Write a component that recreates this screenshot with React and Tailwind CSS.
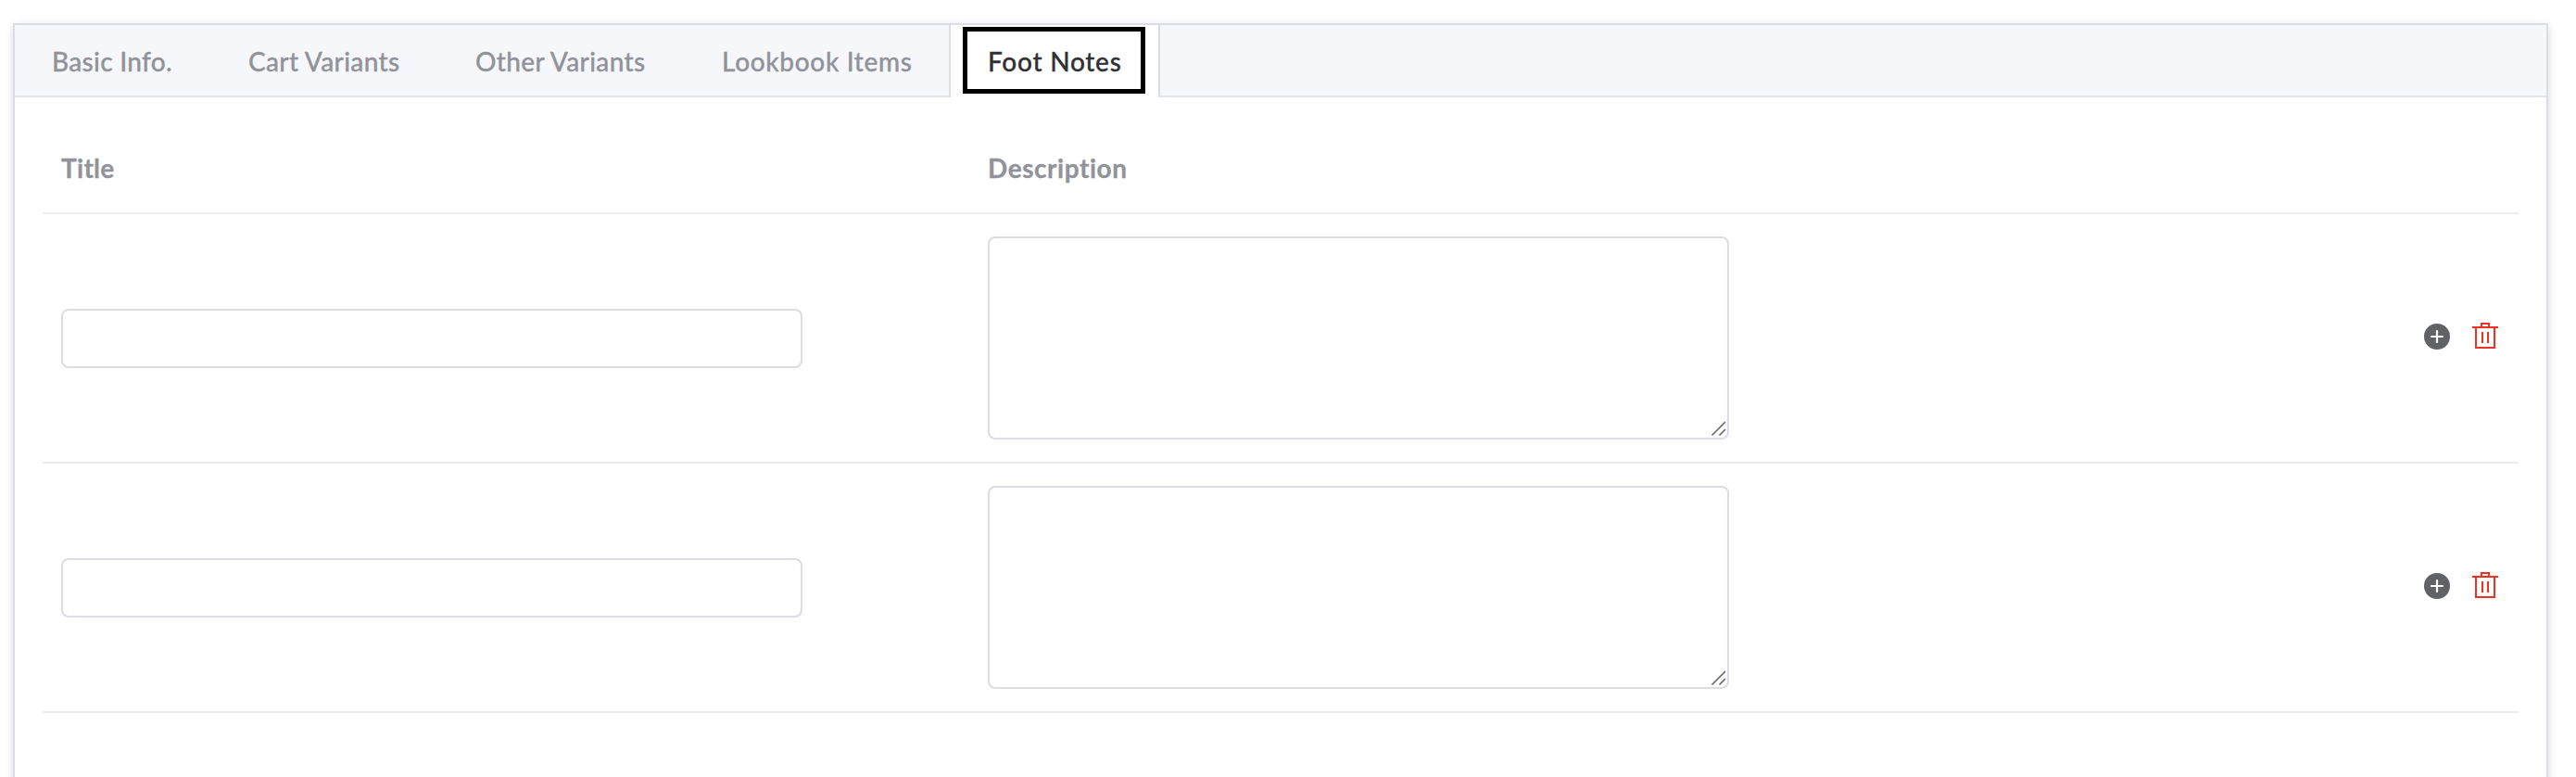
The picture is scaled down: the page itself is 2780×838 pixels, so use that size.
const TABS = [
  { label: 'Basic Info.', box: 'w-[211px] pl-[40px]', text: 'tracking-[0.3px]' },
  { label: 'Cart Variants', box: 'w-[245px] pl-[41px]', text: 'tracking-[0.35px]' },
  { label: 'Other Variants', box: 'w-[266px] pl-[41px]', text: 'tracking-[0.35px]' },
  { label: 'Lookbook Items', box: 'w-[286px] pl-[41px]', text: 'tracking-[0.65px]' },
];

function PlusIcon() {
  return (
    <svg className="h-[28px] w-[28px]" viewBox="0 0 28 28">
      <circle cx="14" cy="14" r="14" fill="#606266" />
      <path d="M14 8v12M8 14h12" stroke="#fff" strokeWidth="2.2" strokeLinecap="round" />
    </svg>
  );
}

function TrashIcon() {
  return (
    <svg className="-mt-px h-[28px] w-[28px]" viewBox="0 0 28 28" fill="none" stroke="#f03022" strokeWidth="2">
      <path d="M0 5h28M10 5V1h8v4M4 5v22h20V5M11 10v12M17 10v12" />
    </svg>
  );
}

function NoteRow() {
  return (
    <div className="flex h-[269px] items-center border-b-2 border-[#ebebf2] pr-[22px] pl-[20px]">
      <input
        aria-label="Title"
        className="mt-px h-[64px] w-[800px] rounded-[8px] border-2 border-[#dcdce4] bg-white px-[28px] outline-none"
      />
      <div className="relative ml-[200px] h-[219px] w-[800px]">
        <textarea
          aria-label="Description"
          className="block h-[219px] w-[800px] resize-none rounded-[8px] border-2 border-[#dcdce4] bg-white outline-none"
        />
        <svg className="absolute right-[3px] bottom-[3px] h-[17px] w-[17px]" viewBox="0 0 17 17" stroke="#666" strokeWidth="1.6">
          <path d="M1.5 15.5 16 1M9.5 15.5 16 9" />
        </svg>
      </div>
      <div className="-mt-[3px] ml-auto flex items-start gap-[24px]">
        <PlusIcon />
        <TrashIcon />
      </div>
    </div>
  );
}

export default function App() {
  return (
    <div className="h-[838px] w-[2780px] overflow-hidden bg-white pt-[25px] pl-[14px] font-['Lato',sans-serif] text-[28px] [font-variant-ligatures:none]">
      <div className="h-[900px] w-[2736px] border-2 border-[#dcdce4] bg-white shadow-[0_4px_8px_rgba(0,0,0,0.12),0_0_12px_rgba(0,0,0,0.04)]">
        <div className="flex h-[78px] bg-[#f5f7fb] font-medium text-[#909399] [-webkit-text-stroke:0.3px_currentColor]">
          {TABS.map((tab) => (
            <div key={tab.label} className={`${tab.box} flex shrink-0 items-center border-b-2 border-[#e4e4ec] pt-[2px] whitespace-nowrap`}>
              <span className={tab.text}>{tab.label}</span>
            </div>
          ))}
          <div className="flex h-[78px] w-[228px] shrink-0 items-start border-x-2 border-[#dcdce4] bg-white pt-[2px] pl-[13px] text-[#303133]">
            <div className="flex h-[72px] w-[197px] items-center border-[5px] border-black pt-[2px] pl-[22px] whitespace-nowrap">
              <span className="tracking-[0.75px]">Foot Notes</span>
            </div>
          </div>
          <div className="grow border-b-2 border-[#e4e4ec]" />
        </div>
        <div className="px-[30px] pt-[30px]">
          <div className="flex h-[96px] items-center border-b-2 border-[#ebebf2] pb-[2px] pl-[20px] font-bold text-[#909399] [-webkit-text-stroke:0.3px_currentColor]">
            <span className="w-[1000px] tracking-[0.3px]">Title</span>
            <span className="tracking-[0.55px]">Description</span>
          </div>
          <NoteRow />
          <NoteRow />
        </div>
      </div>
    </div>
  );
}
